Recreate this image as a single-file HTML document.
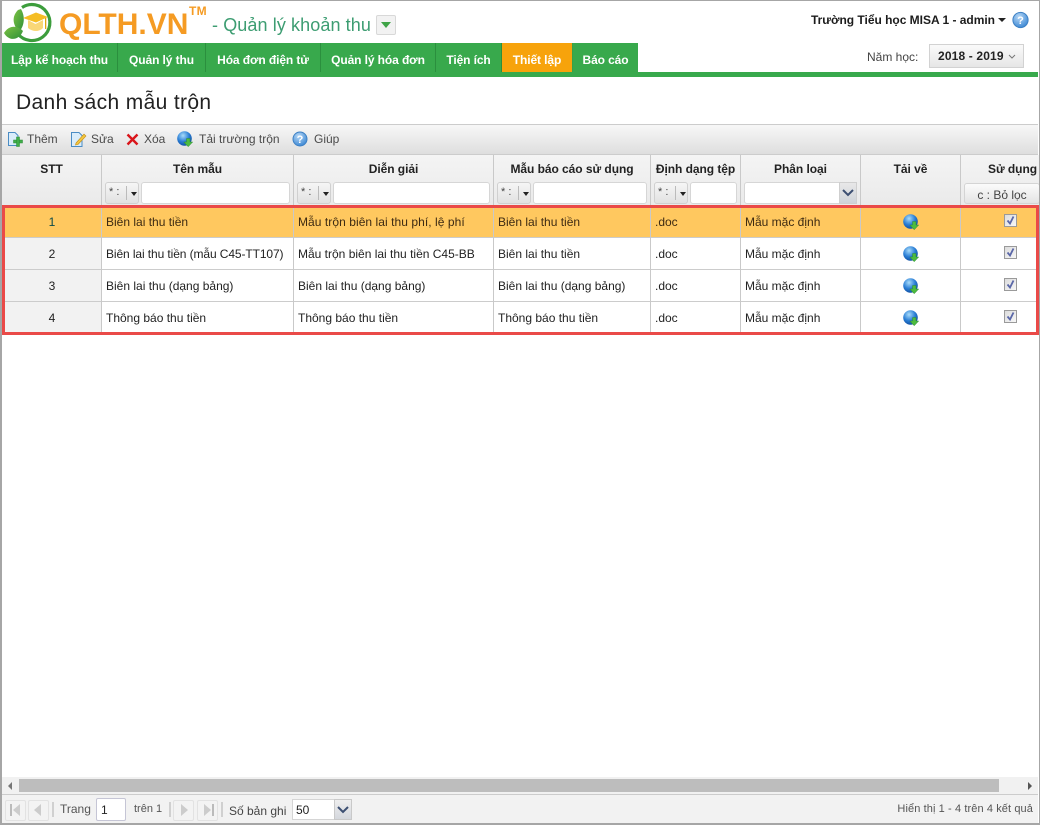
<!DOCTYPE html>
<html><head><meta charset="utf-8"><style>
html,body{margin:0;padding:0;background:#fff}
#p{position:relative;width:1040px;height:825px;overflow:hidden;background:#fff;font-family:"Liberation Sans","Noto Sans CJK SC",sans-serif;font-size:12px;color:#222}
#p div,#p span.a{position:absolute;box-sizing:border-box}
.t{white-space:nowrap;line-height:16px}
.tab{top:43px;height:29px;background:#38a94c;color:#fff;font-weight:bold;text-align:center;line-height:35px;border-right:1px solid #2b8f3e;white-space:nowrap;font-size:12px;letter-spacing:-.1px}
.th{top:155px;height:50px;background:linear-gradient(#f4f4f4,#eaeaea);border-right:1px solid #c9c9c9;font-weight:bold;text-align:center;line-height:28px;white-space:nowrap;color:#222;letter-spacing:-.05px}
.op{top:182px;width:34px;height:22px;background:linear-gradient(#f6f6f6,#e2e2e2);border:1px solid #d0d0d0;border-radius:3px;font-weight:normal;font-size:11px;line-height:19px;color:#444;text-align:left;padding-left:3px}
.op:after{content:"";position:absolute;left:20px;top:3px;height:14px;border-left:1px solid #bbb}
.op:before{content:"";position:absolute;left:25px;top:9px;border:3.5px solid transparent;border-top:4px solid #222;border-bottom:0}
.in{top:182px;height:22px;background:#fff;border:1px solid #d6d6d6;border-radius:3px}
.r{left:2px;width:1036px;height:32px;border-bottom:1px solid #ccc;background:#fff}
.c{height:32px;line-height:32px;white-space:nowrap}
.vl{top:155px;width:1px;height:178px;background:#c9c9c9}
.ck{left:1004px;width:13px;height:13px;background:linear-gradient(135deg,#dcdcdc,#f7f7f7);border:1px solid #9a9a9a}
.pb{top:800px;width:21px;height:21px;border:1px solid #e2e2e2;border-radius:2px;background:#f3f3f3}
.sp{top:802px;width:2px;height:15px;background:#d0d0d0}
</style></head><body><div id="p">
<!-- page frame -->
<div style="left:0;top:0;width:1040px;height:825px;border:1px solid #a6a6a6;border-width:1px 1px 2px 2px;z-index:20;pointer-events:none"></div>

<!-- logo -->
<svg style="position:absolute;left:0;top:0" width="56" height="44" viewBox="0 0 56 44">
<defs><linearGradient id="lf" x1="0" y1="0" x2="1" y2="1"><stop offset="0" stop-color="#7cc242"/><stop offset="1" stop-color="#2f8f3a"/></linearGradient></defs>
<path d="M22 7.5 A18 18 0 1 1 18 34" fill="none" stroke="#3c9d3c" stroke-width="3.2"/>
<path d="M18 10 C12 16 12 24 19 32 C25 25 25 16 21 9Z" fill="url(#lf)"/>
<path d="M4 33 C9 25 17 25 23 31 C20 39 10 43 4 33Z" fill="url(#lf)"/>
<path d="M28 20 V28 C33 32 39 32 43 28 V20 L35.5 24Z" fill="#f9d777"/>
<path d="M23 18 L36 12.5 L48 17 L36 22.5Z" fill="#f5bd24"/>
<rect x="45" y="18" width="1.3" height="11" fill="#e0a50e"/>
</svg>
<div class="t" style="left:59px;top:6px;font-size:30px;line-height:38px;font-weight:bold;color:#f59b23">QLTH.VN</div>
<div class="t" style="left:189px;top:3px;font-size:12px;font-weight:bold;color:#f59b23;letter-spacing:.3px">TM</div>
<div class="t" style="left:212px;top:14px;font-size:18px;line-height:22px;color:#3d9d72;letter-spacing:.1px">- Quản lý khoản thu</div>
<div style="left:376px;top:15px;width:20px;height:20px;background:#f2f2f2;border:1px solid #d8d8d8;border-radius:2px"></div>
<div style="left:381px;top:22px;width:0;height:0;border-left:5px solid transparent;border-right:5px solid transparent;border-top:6px solid #3fa447"></div>

<div class="t" style="left:811px;top:12px;font-weight:bold;color:#1c1c1c;letter-spacing:-.02px">Trường Tiểu học MISA 1 - admin</div>
<div style="left:998px;top:18px;width:0;height:0;border-left:4px solid transparent;border-right:4px solid transparent;border-top:4px solid #222"></div>
<svg style="position:absolute;left:1012px;top:11px" width="18" height="18" viewBox="0 0 18 18"><defs><radialGradient id="q" cx=".4" cy=".3" r=".8"><stop offset="0" stop-color="#b7d8f6"/><stop offset="1" stop-color="#2f7fd0"/></radialGradient></defs><circle cx="8.5" cy="9" r="7.6" fill="url(#q)" stroke="#3d80c4"/><text x="8.5" y="13" text-anchor="middle" font-family="Liberation Sans" font-weight="bold" font-size="11" fill="#fff">?</text></svg>

<!-- tabs -->
<div class="tab" style="left:2px;width:116px">Lập kế hoạch thu</div>
<div class="tab" style="left:118px;width:88px">Quản lý thu</div>
<div class="tab" style="left:206px;width:115px">Hóa đơn điện tử</div>
<div class="tab" style="left:321px;width:115px">Quản lý hóa đơn</div>
<div class="tab" style="left:436px;width:66px">Tiện ích</div>
<div class="tab" style="left:502px;width:71px;background:#f7a30b;border-right:1px solid #3a9f48">Thiết lập</div>
<div class="tab" style="left:573px;width:65px;border-right:0">Báo cáo</div>
<div style="left:2px;top:72px;width:1036px;height:5px;background:#38a94c"></div>
<div class="t" style="left:867px;top:49px;color:#444">Năm học:</div>
<div style="left:929px;top:44px;width:95px;height:24px;background:linear-gradient(#fafafa,#e6e6e6);border:1px solid #d2d2d2;line-height:23px;padding-left:8px;color:#222;white-space:nowrap;font-size:12px;font-weight:bold;letter-spacing:.15px">2018 - 2019</div>
<svg style="position:absolute;left:1008px;top:54px" width="8" height="6"><path d="M1 1 L4 4 L7 1" fill="none" stroke="#777"/></svg>

<div class="t" style="left:16px;top:90px;font-size:21px;line-height:26px;color:#222;letter-spacing:.35px">Danh sách mẫu trộn</div>

<!-- toolbar -->
<div style="left:2px;top:124px;width:1036px;height:31px;background:linear-gradient(#f7f7f7,#dedede);border-top:1px solid #ccc;border-bottom:1px solid #ccc"></div>
<svg style="position:absolute;left:7px;top:131px" width="17" height="17" viewBox="0 0 17 17"><path d="M1.5 1.5H8L11 4.5V14.5H1.5Z" fill="#d9ecfa" stroke="#4a8cc4"/><rect x="6.5" y="9" width="9" height="3" fill="#3fae49" stroke="#2a8a36" stroke-width=".5"/><rect x="9.5" y="6" width="3" height="9.5" fill="#3fae49" stroke="#2a8a36" stroke-width=".5"/></svg>
<div class="t" style="left:27px;top:131px;color:#4a4a4a">Thêm</div>
<svg style="position:absolute;left:70px;top:131px" width="17" height="17" viewBox="0 0 17 17"><path d="M1.5 1.5H9L12 4.5V15.5H1.5Z" fill="#d9ecfa" stroke="#4a8cc4"/><path d="M6 12 L14 3 L16 5 L8 13.5 L5.5 14Z" fill="#f3c63e" stroke="#c48d17" stroke-width=".6"/></svg>
<div class="t" style="left:91px;top:131px;color:#4a4a4a">Sửa</div>
<svg style="position:absolute;left:126px;top:133px" width="13" height="13" viewBox="0 0 13 13"><path d="M1.5 1.5 L11.5 11.5 M11.5 1.5 L1.5 11.5" stroke="#d9151b" stroke-width="2.4"/></svg>
<div class="t" style="left:144px;top:131px;color:#4a4a4a">Xóa</div>
<svg style="position:absolute;left:177px;top:131px" width="17" height="17" viewBox="0 0 17 17"><defs><radialGradient id="g" cx=".4" cy=".3" r=".75"><stop offset="0" stop-color="#a9dcfa"/><stop offset=".55" stop-color="#2b7fd6"/><stop offset="1" stop-color="#0c4a9c"/></radialGradient></defs><circle cx="7.5" cy="7.5" r="7.3" fill="url(#g)"/><path d="M9.5 7.5H13V11H15.7L11.2 15.7 6.8 11H9.5Z" fill="#4dbb3f" stroke="#2a8a36" stroke-width=".5"/></svg>
<div class="t" style="left:199px;top:131px;color:#4a4a4a">Tải trường trộn</div>
<svg style="position:absolute;left:292px;top:131px" width="17" height="17" viewBox="0 0 17 17"><circle cx="8" cy="8" r="7" fill="url(#q)" stroke="#3d80c4"/><text x="8" y="12" text-anchor="middle" font-family="Liberation Sans" font-weight="bold" font-size="11" fill="#fff">?</text></svg>
<div class="t" style="left:314px;top:131px;color:#4a4a4a">Giúp</div>

<!-- header -->
<div class="th" style="left:2px;width:100px">STT</div>
<div class="th" style="left:102px;width:192px">Tên mẫu</div>
<div class="th" style="left:294px;width:200px">Diễn giải</div>
<div class="th" style="left:494px;width:157px">Mẫu báo cáo sử dụng</div>
<div class="th" style="left:651px;width:90px">Định dạng tệp</div>
<div class="th" style="left:741px;width:120px">Phân loại</div>
<div class="th" style="left:861px;width:100px">Tải về</div>
<div class="th" style="left:961px;width:79px;text-align:left;padding-left:27px;border-right:0">Sử dụng</div>

<div class="op" style="left:105px">* :</div><div class="in" style="left:141px;width:149px"></div>
<div class="op" style="left:297px">* :</div><div class="in" style="left:333px;width:157px"></div>
<div class="op" style="left:497px">* :</div><div class="in" style="left:533px;width:114px"></div>
<div class="op" style="left:654px">* :</div><div class="in" style="left:690px;width:47px"></div>
<div class="in" style="left:744px;width:96px;border-radius:3px 0 0 3px"></div>
<div style="left:839px;top:182px;width:18px;height:22px;background:linear-gradient(#e8e8e8,#cfd3d9);border:1px solid #cfcfcf"></div>
<svg style="position:absolute;left:842px;top:189px" width="12" height="8"><path d="M1 1 L6 6 L11 1" fill="none" stroke="#3c4f72" stroke-width="2"/></svg>
<div style="left:964px;top:183px;width:76px;height:21px;background:linear-gradient(#fbfbfb,#e4e4e4);border:1px solid #d4d4d4;border-radius:3px;text-align:center;line-height:23px;color:#444;white-space:nowrap">c : Bỏ lọc</div>

<!-- rows -->
<div class="r" style="top:206px;background:#ffc85f"></div>
<div class="r" style="top:238px"></div>
<div class="r" style="top:270px"></div>
<div class="r" style="top:302px"></div>
<div style="left:2px;top:238px;width:100px;height:96px;background:#f2f2f2"></div>
<div style="left:2px;top:269px;width:100px;height:1px;background:#ccc"></div>
<div style="left:2px;top:301px;width:100px;height:1px;background:#ccc"></div>
<div class="vl" style="left:101px;top:206px;height:128px"></div>
<div class="vl" style="left:293px;top:206px;height:128px"></div>
<div class="vl" style="left:493px;top:206px;height:128px"></div>
<div class="vl" style="left:650px;top:206px;height:128px"></div>
<div class="vl" style="left:740px;top:206px;height:128px"></div>
<div class="vl" style="left:860px;top:206px;height:128px"></div>
<div class="vl" style="left:960px;top:206px;height:128px"></div>

<div class="c" style="left:2px;width:100px;top:206px;text-align:center;color:#0b4a4a">1</div>
<div class="c" style="left:106px;top:206px;color:#3d2a12">Biên lai thu tiền</div>
<div class="c" style="left:298px;top:206px;color:#3d2a12;letter-spacing:.06px">Mẫu trộn biên lai thu phí, lệ phí</div>
<div class="c" style="left:498px;top:206px;color:#3d2a12">Biên lai thu tiền</div>
<div class="c" style="left:655px;top:206px;color:#3d2a12">.doc</div>
<div class="c" style="left:745px;top:206px;color:#3d2a12">Mẫu mặc định</div>

<div class="c" style="left:2px;width:100px;top:238px;text-align:center">2</div>
<div class="c" style="left:106px;top:238px;letter-spacing:-.1px">Biên lai thu tiền (mẫu C45-TT107)</div>
<div class="c" style="left:298px;top:238px">Mẫu trộn biên lai thu tiền C45-BB</div>
<div class="c" style="left:498px;top:238px">Biên lai thu tiền</div>
<div class="c" style="left:655px;top:238px">.doc</div>
<div class="c" style="left:745px;top:238px">Mẫu mặc định</div>

<div class="c" style="left:2px;width:100px;top:270px;text-align:center">3</div>
<div class="c" style="left:106px;top:270px">Biên lai thu (dạng bảng)</div>
<div class="c" style="left:298px;top:270px">Biên lai thu (dạng bảng)</div>
<div class="c" style="left:498px;top:270px">Biên lai thu (dạng bảng)</div>
<div class="c" style="left:655px;top:270px">.doc</div>
<div class="c" style="left:745px;top:270px">Mẫu mặc định</div>

<div class="c" style="left:2px;width:100px;top:302px;text-align:center">4</div>
<div class="c" style="left:106px;top:302px">Thông báo thu tiền</div>
<div class="c" style="left:298px;top:302px">Thông báo thu tiền</div>
<div class="c" style="left:498px;top:302px">Thông báo thu tiền</div>
<div class="c" style="left:655px;top:302px">.doc</div>
<div class="c" style="left:745px;top:302px">Mẫu mặc định</div>

<svg style="position:absolute;left:903px;top:214px" width="17" height="17" viewBox="0 0 17 17"><circle cx="7.5" cy="7.5" r="7.3" fill="url(#g)"/><path d="M9.5 7.5H13V11H15.7L11.2 15.7 6.8 11H9.5Z" fill="#4dbb3f" stroke="#2a8a36" stroke-width=".5"/></svg>
<svg style="position:absolute;left:903px;top:246px" width="17" height="17" viewBox="0 0 17 17"><circle cx="7.5" cy="7.5" r="7.3" fill="url(#g)"/><path d="M9.5 7.5H13V11H15.7L11.2 15.7 6.8 11H9.5Z" fill="#4dbb3f" stroke="#2a8a36" stroke-width=".5"/></svg>
<svg style="position:absolute;left:903px;top:278px" width="17" height="17" viewBox="0 0 17 17"><circle cx="7.5" cy="7.5" r="7.3" fill="url(#g)"/><path d="M9.5 7.5H13V11H15.7L11.2 15.7 6.8 11H9.5Z" fill="#4dbb3f" stroke="#2a8a36" stroke-width=".5"/></svg>
<svg style="position:absolute;left:903px;top:310px" width="17" height="17" viewBox="0 0 17 17"><circle cx="7.5" cy="7.5" r="7.3" fill="url(#g)"/><path d="M9.5 7.5H13V11H15.7L11.2 15.7 6.8 11H9.5Z" fill="#4dbb3f" stroke="#2a8a36" stroke-width=".5"/></svg>

<div class="ck" style="top:214px"></div><div class="ck" style="top:246px"></div><div class="ck" style="top:278px"></div><div class="ck" style="top:310px"></div>
<svg style="position:absolute;left:1005px;top:215px;z-index:2" width="11" height="11"><path d="M2.5 5.5 L5 8.5 L8.5 1.5" fill="none" stroke="#5a67a8" stroke-width="1.8"/></svg>
<svg style="position:absolute;left:1005px;top:247px;z-index:2" width="11" height="11"><path d="M2.5 5.5 L5 8.5 L8.5 1.5" fill="none" stroke="#5a67a8" stroke-width="1.8"/></svg>
<svg style="position:absolute;left:1005px;top:279px;z-index:2" width="11" height="11"><path d="M2.5 5.5 L5 8.5 L8.5 1.5" fill="none" stroke="#5a67a8" stroke-width="1.8"/></svg>
<svg style="position:absolute;left:1005px;top:311px;z-index:2" width="11" height="11"><path d="M2.5 5.5 L5 8.5 L8.5 1.5" fill="none" stroke="#5a67a8" stroke-width="1.8"/></svg>

<!-- red annotation -->
<div style="left:2px;top:205px;width:1037px;height:130px;border:3px solid #ea4a48;z-index:5"></div>

<!-- scrollbar -->
<div style="left:2px;top:777px;width:1036px;height:17px;background:#f1f1f1"></div>
<div style="left:19px;top:779px;width:980px;height:13px;background:#bdbdbd"></div>
<div style="left:8px;top:782px;width:0;height:0;border-top:4px solid transparent;border-bottom:4px solid transparent;border-right:4px solid #777"></div>
<div style="left:1028px;top:782px;width:0;height:0;border-top:4px solid transparent;border-bottom:4px solid transparent;border-left:4px solid #555"></div>

<!-- pager -->
<div style="left:2px;top:794px;width:1036px;height:29px;background:#f2f2f2;border-top:1px solid #ccc"></div>
<div class="pb" style="left:5px"></div><div class="pb" style="left:28px"></div>
<div class="pb" style="left:173px"></div><div class="pb" style="left:197px"></div>
<svg style="position:absolute;left:0;top:800px" width="225" height="22">
<rect x="10" y="4" width="2" height="12" fill="#bbb"/><path d="M20 4V16L13 10Z" fill="#ccc"/>
<path d="M41 4V16L34 10Z" fill="#ccc"/>
<path d="M181 4V16L188 10Z" fill="#ccc"/>
<path d="M204 4V16L211 10Z" fill="#ccc"/><rect x="212" y="4" width="2" height="12" fill="#bbb"/>
</svg>
<div class="sp" style="left:52px"></div><div class="sp" style="left:169px"></div><div class="sp" style="left:221px"></div>
<div class="t" style="left:60px;top:801px;color:#555">Trang</div>
<div style="left:96px;top:798px;width:30px;height:23px;background:#fff;border:1px solid #c5c5d5;border-radius:2px;padding-left:4px;line-height:22px;color:#222;font-size:12px">1</div>
<div class="t" style="left:134px;top:801px;color:#555;font-size:11px">trên 1</div>
<div class="t" style="left:229px;top:803px;color:#444">Số bản ghi</div>
<div style="left:292px;top:799px;width:43px;height:21px;background:#fff;border:1px solid #d5d5d5;padding-left:3px;line-height:20px;color:#222;font-size:12px">50</div>
<div style="left:334px;top:799px;width:18px;height:21px;background:linear-gradient(#eee,#d4d7dd);border:1px solid #c9c9c9"></div>
<svg style="position:absolute;left:337px;top:806px" width="12" height="8"><path d="M1 1 L6 6 L11 1" fill="none" stroke="#3c4f72" stroke-width="2"/></svg>
<div class="t" style="right:7px;top:801px;color:#555;font-size:11px;letter-spacing:.1px">Hiển thị 1 - 4 trên 4 kết quả</div>
</div></body></html>
